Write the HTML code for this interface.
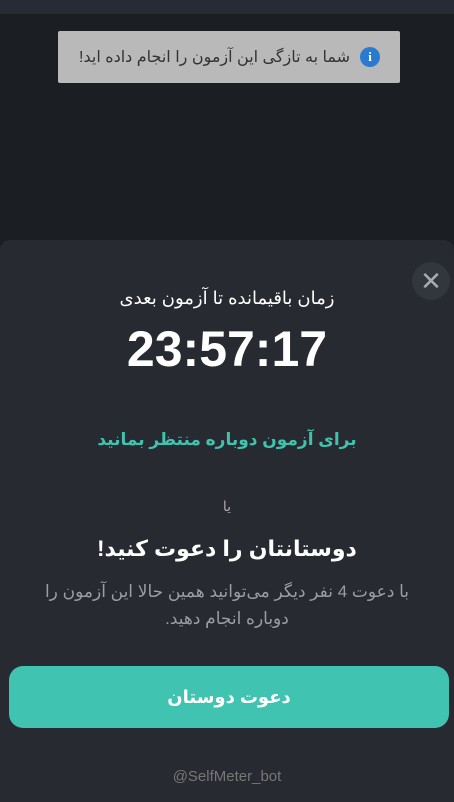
<!DOCTYPE html>
<html><head><meta charset="utf-8"><style>
*{margin:0;padding:0;box-sizing:border-box}
body{width:454px;height:802px;background:#1b1e22;position:relative;overflow:hidden;font-family:"Liberation Sans","DejaVu Sans",sans-serif;direction:rtl}
.top{position:absolute;top:0;left:0;width:454px;height:14px;background:#272b33}
.toast{position:absolute;left:58px;top:31px;width:342px;height:52px;background:#b9b9b9;border-radius:2px;color:#333;font-size:16px;display:flex;align-items:center;padding-right:20px}
.toast .i{width:20px;height:20px;border-radius:50%;background:#2a7ad0;color:#fff;font-size:13px;font-weight:bold;display:flex;align-items:center;justify-content:center;margin-left:10px;font-family:"Liberation Serif",serif}
.sheet{position:absolute;left:0;top:240px;width:454px;height:562px;background:#272a31;border-radius:10px 10px 0 0}
.x{position:absolute;left:412px;top:22px;width:38px;height:38px;border-radius:50%;background:#32363d;color:#aaa;font-size:26px;display:flex;align-items:center;justify-content:center}
.c{position:absolute;width:100%;text-align:center}
.btn{position:absolute;left:9px;top:426px;width:440px;height:62px;background:#40c3b0;border-radius:14px;color:#fff;font-weight:bold;font-size:18px;display:flex;align-items:center;justify-content:center}
</style></head><body>
<div class="top"></div>
<div class="toast"><div class="i">i</div>شما به تازگی این آزمون را انجام داده اید!</div>
<div class="sheet">
<div class="x">✕</div>
<div class="c" style="top:48px;color:#fff;font-size:18px">زمان باقیمانده تا آزمون بعدی</div>
<div class="c" style="top:80px;color:#fff;font-size:50px;font-weight:bold;direction:ltr">23:57:17</div>
<div class="c" style="top:190px;color:#3fc3ae;font-size:17px;font-weight:bold">برای آزمون دوباره منتظر بمانید</div>
<div class="c" style="top:258px;color:#aaa;font-size:14px">یا</div>
<div class="c" style="top:296px;color:#fff;font-size:22px;font-weight:bold">دوستانتان را دعوت کنید!</div>
<div class="c" style="top:338px;color:#9a9da2;font-size:17px;line-height:27px;padding:0 24px">با دعوت 4 نفر دیگر می‌توانید همین حالا این آزمون را دوباره انجام دهید.</div>
<div class="btn">دعوت دوستان</div>
<div class="c" style="top:528px;color:#777;font-size:15px;direction:ltr">@SelfMeter_bot</div>
</div>
</body></html>
